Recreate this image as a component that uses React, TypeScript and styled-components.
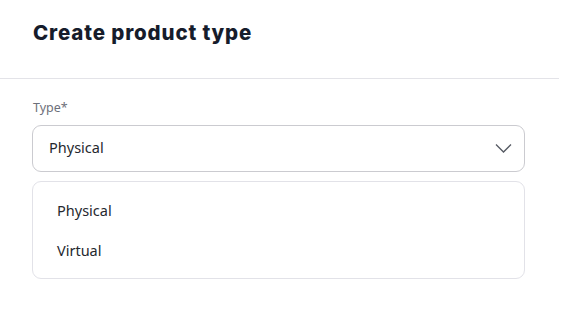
import React from 'react';
import styled, { createGlobalStyle } from 'styled-components';

const GlobalStyle = createGlobalStyle`
  body {
    margin: 0;
    background: #ffffff;
    font-family: 'Noto Sans', 'Open Sans', sans-serif;
  }
`;

const Page = styled.div`
  width: 561px;
  height: 312px;
  background: #ffffff;
`;

const Header = styled.div`
  width: 559px;
  height: 79px;
  box-sizing: border-box;
  padding: 20px 33px 0;
  border-bottom: 1px solid #e3e3e8;
`;

const Title = styled.h1`
  margin: 0;
  font-family: Inter, 'Noto Sans', sans-serif;
  font-weight: 800;
  font-size: 20.5px;
  line-height: 26px;
  letter-spacing: 0.85px;
  color: #161c2b;
`;

const Body = styled.div`
  width: 493px;
  padding: 20px 0 0 32px;
`;

const Label = styled.div`
  font-size: 12.5px;
  line-height: 18px;
  color: #6d707a;
  padding-left: 1px;
`;

const SelectBox = styled.div`
  margin-top: 8px;
  height: 47px;
  box-sizing: border-box;
  border: 1px solid #cbcbd0;
  border-radius: 9px;
  display: flex;
  align-items: center;
  justify-content: space-between;
  padding: 0 12px 3px 16px;
  font-size: 14.5px;
  color: #25282e;
`;

const Menu = styled.div`
  margin-top: 9px;
  height: 98px;
  box-sizing: border-box;
  border: 1px solid #e2e2e8;
  border-radius: 9px;
  padding: 8px 0;
`;

const Option = styled.div`
  height: 40px;
  display: flex;
  align-items: center;
  padding-left: 24px;
  font-size: 14.5px;
  color: #25282e;
`;

const Chevron = () => (
  <svg width="17" height="11" viewBox="0 0 17 11" fill="none" style={{ marginTop: 3 }}>
    <path d="M1 1.5L8.5 9L16 1.5" stroke="#565a63" strokeWidth="1.3" />
  </svg>
);

export default function App() {
  return (
    <Page>
      <GlobalStyle />
      <Header>
        <Title>Create product type</Title>
      </Header>
      <Body>
        <Label>Type*</Label>
        <SelectBox>
          <span>Physical</span>
          <Chevron />
        </SelectBox>
        <Menu>
          <Option>Physical</Option>
          <Option>Virtual</Option>
        </Menu>
      </Body>
    </Page>
  );
}
